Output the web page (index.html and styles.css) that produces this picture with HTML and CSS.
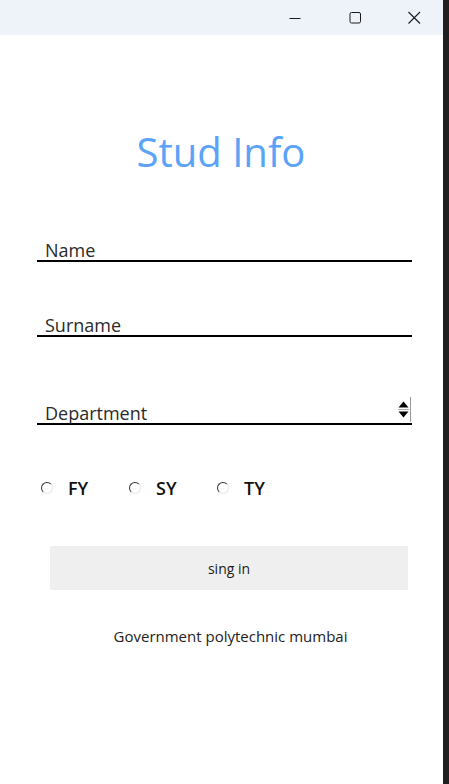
FILE: index.html
```html
<!DOCTYPE html>
<html>
<head>
<meta charset="utf-8">
<link rel="stylesheet" href="styles.css">
</head>
<body>
<div class="screen">
  <div class="window">
    <div class="titlebar">
      <span class="tb-btn">
        <svg width="14" height="14" viewBox="0 0 14 14"><path d="M1.5 7.5h11" stroke="#1a1a1a" stroke-width="1"/></svg>
      </span>
      <span class="tb-btn">
        <svg width="14" height="14" viewBox="0 0 14 14"><rect x="2" y="1.5" width="10.5" height="10.5" rx="1.5" fill="none" stroke="#1a1a1a" stroke-width="1"/></svg>
      </span>
      <span class="tb-btn">
        <svg width="14" height="14" viewBox="0 0 14 14"><path d="M1.5 1L13 12.5M13 1L1.5 12.5" stroke="#1a1a1a" stroke-width="1.1"/></svg>
      </span>
    </div>
    <div class="content">
      <h1 class="title">Stud Info</h1>
      <div class="field field-name"><span class="label">Name</span></div>
      <div class="field field-surname"><span class="label">Surname</span></div>
      <div class="field field-dept">
        <span class="label">Department</span>
        <span class="spinner">
          <svg width="16" height="25" viewBox="0 0 16 25">
            <path d="M2.5 10.5L7.5 4.5L12.5 10.5Z" fill="#000"/>
            <path d="M2 12.5H13" stroke="#aaa" stroke-width="1"/>
            <path d="M2.5 14.5H12.5L7.5 20.5Z" fill="#000"/>
            <path d="M14.5 0V25" stroke="#999" stroke-width="1"/>
          </svg>
        </span>
      </div>
      <div class="radios">
        <label class="radio"><span class="dot"></span><span class="rlabel">FY</span></label>
        <label class="radio"><span class="dot"></span><span class="rlabel">SY</span></label>
        <label class="radio"><span class="dot"></span><span class="rlabel">TY</span></label>
      </div>
      <div class="button">sing in</div>
      <p class="footer">Government polytechnic mumbai</p>
    </div>
  </div>
  <div class="desk"></div>
</div>
</body>
</html>
```
FILE: styles.css
```css
* { box-sizing: border-box; }
html, body { margin: 0; padding: 0; }
body {
  background: #1f1f1f;
  font-family: "Open Sans", "Noto Sans", sans-serif;
  color: #1a1a1a;
}
.screen {
  display: flex;
  width: 449px;
  height: 784px;
}
.window {
  width: 443px;
  height: 784px;
  background: #ffffff;
  display: flex;
  flex-direction: column;
}
.desk {
  flex: 1;
  background: #1f1f1f;
}
.titlebar {
  height: 35px;
  background: #eef2f9;
  display: flex;
  justify-content: flex-end;
  align-items: center;
}
.tb-btn {
  width: 60px;
  height: 35px;
  display: flex;
  align-items: center;
  justify-content: center;
}
.tb-btn:last-child { width: 58px; }
.content {
  display: flex;
  flex-direction: column;
  padding-left: 37px;
  padding-right: 31px;
}
.title {
  margin: 91px 0 0 0;
  font-weight: 400;
  font-size: 40px;
  line-height: 52px;
  color: #5aa3f8;
  text-align: center;
  padding-right: 7px;
}
.field {
  border-bottom: 2px solid #000;
  display: flex;
  align-items: flex-end;
  justify-content: space-between;
  padding-left: 8px;
}
.label {
  font-size: 18px;
  line-height: 22px;
  color: #2a2a2a;
  margin-bottom: -1px;
}
.field-name { margin-top: 61px; }
.field-surname { margin-top: 52px; }
.field-dept { margin-top: 60px; }
.spinner {
  display: flex;
  margin-bottom: 1px;
}
.radios {
  display: flex;
  margin-top: 52px;
  padding-left: 4px;
}
.radio {
  display: flex;
  align-items: center;
  width: 88px;
}
.dot {
  width: 12px;
  height: 12px;
  border-radius: 50%;
  border: 1.5px solid;
  border-color: #333 #e6e6e6 #e6e6e6 #333;
  background: #fff;
  margin-right: 15px;
}
.rlabel {
  font-size: 18px;
  font-weight: 600;
  line-height: 22px;
  color: #111;
}
.button {
  margin: 47px 4px 0 13px;
  height: 44px;
  background: #efefef;
  display: flex;
  align-items: center;
  justify-content: center;
  font-size: 14px;
  color: #1a1a1a;
}
.footer {
  margin: 36px 0 0 12px;
  text-align: center;
  font-size: 15px;
  line-height: 20px;
  color: #222;
}
```
